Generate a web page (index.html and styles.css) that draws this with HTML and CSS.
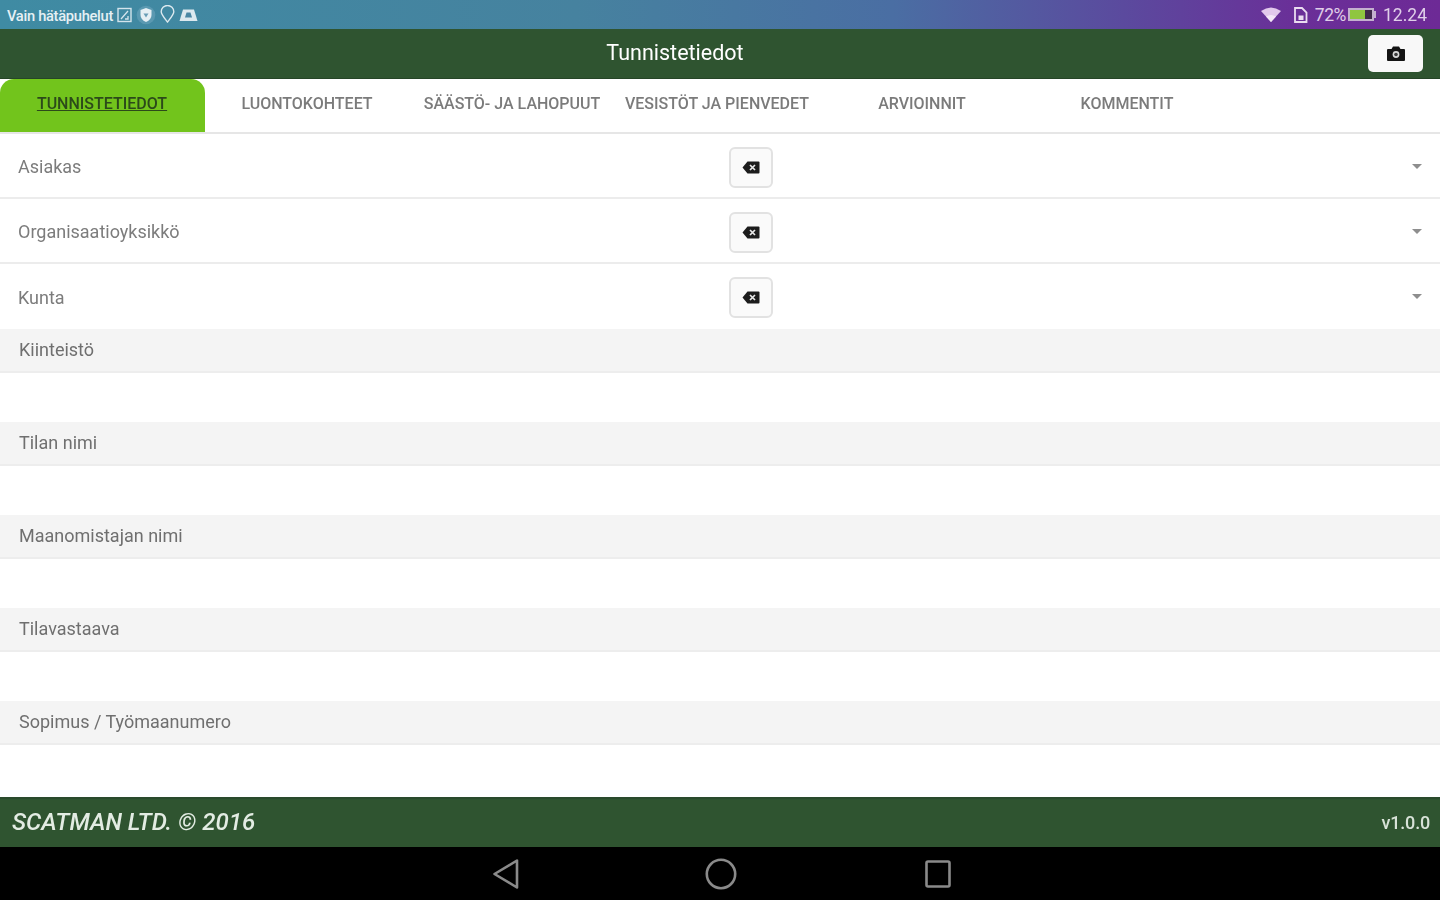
FILE: index.html
```html
<!DOCTYPE html>
<html lang="fi">
<head>
<meta charset="utf-8">
<title>Tunnistetiedot</title>
<link rel="stylesheet" href="styles.css">
</head>
<body>
<div class="screen">
  <div class="statusbar">
    <div class="status-left">
      <span class="carrier">Vain hätäpuhelut</span>
      <svg class="si" width="15" height="16" viewBox="0 0 15 16"><rect x="1" y="1.500" width="13" height="13" fill="none" stroke="#d3e4ec" stroke-width="1.400"/><path d="M4 12 L11 4 M8 12h3V9" fill="none" stroke="#d3e4ec" stroke-width="1.300"/></svg>
      <svg class="si" width="20" height="22" viewBox="0 0 20 22"><circle cx="10" cy="11" r="9.300" fill="#6fa6bd" fill-opacity=".55"/><path d="M4.500 6 L10 4 L15.500 6 V11 Q15.500 15.500 10 18 Q4.500 15.500 4.500 11Z" fill="#e6eff4"/><path d="M7.500 9.500h5l-2.500 4z" fill="#6a9db6"/></svg>
      <svg class="si" width="15" height="19" viewBox="0 0 15 19"><path d="M7.500 17 C3.500 12 1.200 9.500 1.200 6.800 A6.300 6.300 0 0 1 13.800 6.800 C13.800 9.500 11.500 12 7.500 17Z" fill="none" stroke="#dce9ef" stroke-width="1.400"/></svg>
      <svg class="si" width="19" height="14" viewBox="0 0 19 14"><path d="M0.500 13 L4 1.500 H15 L18.500 13Z" fill="#dce9ef"/><path d="M6 9.500 L7.500 4.500 H11.500 L13 9.500Z" fill="#4a87a4"/></svg>
    </div>
    <div class="status-right">
      <svg class="wifi" width="22" height="17" viewBox="0 0 22 17"><path d="M11 16 L1 5 Q11 -2 21 5Z" fill="#e2c9ec"/><path d="M11 16 L6 10.500 Q11 7.500 16 10.500Z" fill="#f3e7f7"/></svg>
      <svg class="sim" width="15" height="16" viewBox="0 0 15 16"><path d="M2 1 H9 L13.500 5.500 V15 H2Z" fill="none" stroke="#eadcf0" stroke-width="1.800"/><path d="M5.500 8.500 H10.500 V13 H5.500Z" fill="#eadcf0"/></svg>
      <span class="pct">72%</span>
      <svg class="bat" width="28" height="15" viewBox="0 0 28 15"><rect x="0" y="1" width="26" height="13" fill="#c4b0cf"/><rect x="26" y="4" width="2" height="7" fill="#c4b0cf"/><rect x="2" y="3" width="15" height="9" fill="#8fc63f"/><rect x="17" y="3" width="7" height="9" fill="#3f2a4a"/></svg>
      <span class="clock">12.24</span>
    </div>
  </div>

  <header class="appbar">
    <h1 class="title">Tunnistetiedot</h1>
    <button class="cam-btn" type="button" aria-label="Kamera">
      <svg width="18" height="15" viewBox="0 0 18 15"><path d="M6 0.500 H12 L13.500 3 H17 A1 1 0 0 1 18 4 V14 A1 1 0 0 1 17 15 H1 A1 1 0 0 1 0 14 V4 A1 1 0 0 1 1 3 H4.500Z" fill="#141414"/><circle cx="9" cy="8.500" r="3.400" fill="#d8d8d8"/><circle cx="9" cy="8.500" r="1.800" fill="#3a3a3a"/></svg>
    </button>
  </header>

  <nav class="tabs">
    <a class="tab active">TUNNISTETIEDOT</a>
    <a class="tab">LUONTOKOHTEET</a>
    <a class="tab">SÄÄSTÖ- JA LAHOPUUT</a>
    <a class="tab">VESISTÖT JA PIENVEDET</a>
    <a class="tab">ARVIOINNIT</a>
    <a class="tab">KOMMENTIT</a>
  </nav>

  <main class="form">
    <div class="select-row">
      <span class="label">Asiakas</span>
      <button class="clear-btn" type="button" aria-label="Tyhjennä"><svg width="18" height="13" viewBox="0 0 18 13"><path d="M5.500 0.500 H16.500 A1 1 0 0 1 17.500 1.500 V11.500 A1 1 0 0 1 16.500 12.500 H5.500 L0.500 6.500Z" fill="#1c1c1c"/><path d="M8 4 L13 9 M13 4 L8 9" stroke="#e8e8e8" stroke-width="1.700"/></svg></button>
      <span class="caret"></span>
    </div>
    <div class="select-row">
      <span class="label">Organisaatioyksikkö</span>
      <button class="clear-btn" type="button" aria-label="Tyhjennä"><svg width="18" height="13" viewBox="0 0 18 13"><path d="M5.500 0.500 H16.500 A1 1 0 0 1 17.500 1.500 V11.500 A1 1 0 0 1 16.500 12.500 H5.500 L0.500 6.500Z" fill="#1c1c1c"/><path d="M8 4 L13 9 M13 4 L8 9" stroke="#e8e8e8" stroke-width="1.700"/></svg></button>
      <span class="caret"></span>
    </div>
    <div class="select-row last">
      <span class="label">Kunta</span>
      <button class="clear-btn" type="button" aria-label="Tyhjennä"><svg width="18" height="13" viewBox="0 0 18 13"><path d="M5.500 0.500 H16.500 A1 1 0 0 1 17.500 1.500 V11.500 A1 1 0 0 1 16.500 12.500 H5.500 L0.500 6.500Z" fill="#1c1c1c"/><path d="M8 4 L13 9 M13 4 L8 9" stroke="#e8e8e8" stroke-width="1.700"/></svg></button>
      <span class="caret"></span>
    </div>

    <div class="field"><div class="field-label">Kiinteistö</div><div class="field-input"></div></div>
    <div class="field"><div class="field-label">Tilan nimi</div><div class="field-input"></div></div>
    <div class="field"><div class="field-label">Maanomistajan nimi</div><div class="field-input"></div></div>
    <div class="field"><div class="field-label">Tilavastaava</div><div class="field-input"></div></div>
    <div class="field"><div class="field-label">Sopimus / Työmaanumero</div><div class="field-input"></div></div>
  </main>

  <footer class="footer">
    <span class="copy">SCATMAN LTD. © 2016</span>
    <span class="version">v1.0.0</span>
  </footer>

  <div class="navbar">
    <svg width="28" height="32" viewBox="0 0 28 32"><path d="M25 2.500 V29.500 L2.500 16Z" fill="none" stroke="#8a8a8a" stroke-width="2.600" stroke-linejoin="round"/></svg>
    <svg width="32" height="32" viewBox="0 0 32 32"><circle cx="16" cy="16" r="14.200" fill="none" stroke="#8a8a8a" stroke-width="2.600"/></svg>
    <svg width="26" height="28" viewBox="0 0 26 28"><rect x="1.500" y="1.500" width="23" height="25" rx="1.500" fill="none" stroke="#8a8a8a" stroke-width="2.600"/></svg>
  </div>
</div>
</body>
</html>
```

FILE: styles.css
```css
* { box-sizing: border-box; }

html, body {
  margin: 0;
  padding: 0;
  background: #fff;
}

body {
  font-family: Roboto, "Liberation Sans", sans-serif;
  overflow: hidden;
}

.screen {
  width: 1440px;
  height: 900px;
  display: flex;
  flex-direction: column;
  filter: blur(0.6px);
}

/* status bar */
.statusbar {
  height: 29px;
  flex: none;
  display: flex;
  align-items: center;
  justify-content: space-between;
  padding: 0 13px 0 7px;
  background: linear-gradient(90deg, #3f8ba3 0%, #46829f 40%, #4a6ea3 62%, #5b4a9e 78%, #6a2f98 90%, #6d2a96 100%);
}

.status-left,
.status-right {
  display: flex;
  align-items: center;
}

.status-left { gap: 4px; }

.carrier {
  font-size: 14.700px;
  font-weight: 500;
  letter-spacing: -0.300px;
  color: #e6f0f4;
  padding-top: 2px;
}

.status-right { color: #e0cfe9; font-size: 17.500px; }

.wifi { margin-right: 11px; }
.sim { margin-right: 7px; }
.pct { margin-right: 2px; letter-spacing: -0.400px; }
.bat { margin-right: 7px; }

/* app bar */
.appbar {
  height: 50px;
  flex: none;
  display: flex;
  align-items: center;
  justify-content: flex-end;
  position: relative;
  padding-right: 17px;
  background: #2f5430;
  border-bottom: 1px solid #264527;
}

.title {
  margin: 0 0 2px;
  position: absolute;
  left: 0;
  width: 1350px;
  text-align: center;
  font-size: 21.500px;
  font-weight: 400;
  color: #fff;
}

.cam-btn {
  width: 55px;
  height: 37px;
  display: flex;
  align-items: center;
  justify-content: center;
  padding: 0;
  border: 0;
  border-radius: 5px;
  background: #f8f8f8;
}

/* tabs */
.tabs {
  height: 55px;
  flex: none;
  display: flex;
  background: #fff;
  border-bottom: 2px solid #e6e6e6;
}

.tab {
  width: 205px;
  display: flex;
  align-items: center;
  justify-content: center;
  padding: 0 1px 5px 0;
  font-size: 16px;
  font-weight: 500;
  color: #7b7b7b;
  white-space: nowrap;
}

.tab.active {
  color: #2c4a1a;
  text-decoration: underline;
  background: #72c41c;
  border-radius: 14px 14px 0 0;
}

/* selects */
.form {
  flex: 1;
  display: flex;
  flex-direction: column;
}

.select-row {
  height: 65px;
  flex: none;
  display: flex;
  align-items: center;
  position: relative;
  padding: 0 18px;
  border-bottom: 2px solid #ececec;
}

.select-row.last {
  border-bottom: 0;
}

.label {
  font-size: 18px;
  color: #7c7c7c;
  padding-top: 2px;
}

.clear-btn {
  position: absolute;
  left: 729px;
  top: 13px;
  width: 44px;
  height: 41px;
  display: flex;
  align-items: center;
  justify-content: center;
  padding: 0;
  border: 2px solid #e2e2e2;
  border-radius: 6px;
  background: #fafafa;
}

.caret {
  position: absolute;
  right: 18px;
  top: 30px;
  width: 0;
  height: 0;
  border-left: 5px solid transparent;
  border-right: 5px solid transparent;
  border-top: 5px solid #8e8e8e;
}

/* text fields */
.field {
  height: 93px;
  flex: none;
}

.field-label {
  height: 44px;
  display: flex;
  align-items: center;
  padding: 0 19px 1px;
  font-size: 18px;
  color: #6f6f6f;
  background: #f4f4f4;
  border-bottom: 2px solid #ededed;
}

.field-input {
  height: 49px;
  background: #fff;
}

/* footer */
.footer {
  height: 50px;
  flex: none;
  display: flex;
  align-items: center;
  justify-content: space-between;
  padding: 0 10px 2px 12px;
  background: #2f5430;
  border-top: 2px solid #2a4a2c;
}

.copy {
  font-size: 24px;
  font-style: italic;
  font-weight: 500;
  color: #e3ece3;
}

.version {
  font-size: 18px;
  font-weight: 500;
  letter-spacing: -0.200px;
  color: #d8e2d8;
}

/* nav bar */
.navbar {
  height: 53px;
  flex: none;
  position: relative;
  background: #000;
}

.navbar svg {
  position: absolute;
  top: 11px;
}

.navbar svg:nth-child(1) { left: 492px; }
.navbar svg:nth-child(2) { left: 705px; }
.navbar svg:nth-child(3) { left: 925px; top: 13px; }
```
